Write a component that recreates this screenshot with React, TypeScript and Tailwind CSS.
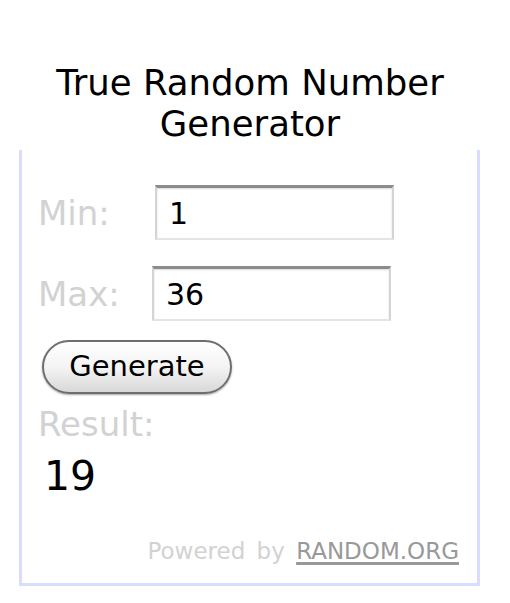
import React from 'react'

const font = { fontFamily: '"DejaVu Sans", Verdana, sans-serif' }

function Field({ label, value, labelWidth }: { label: string; value: string; labelWidth: string }) {
  return (
    <div className="flex items-center">
      <span className={`${labelWidth} text-[34px] leading-none text-[#d2d2d2]`}>{label}</span>
      <div className="flex h-[55px] w-[239px] items-center border-t-[3px] border-r-2 border-b-2 border-l-2 border-t-[#8c8c8c] border-r-[#d4d4d4] border-b-[#e4e4e4] border-l-[#d4d4d4] bg-white pl-[12px] text-[30px] text-black shadow-[inset_0_1px_2px_rgba(0,0,0,0.15)]">
        {value}
      </div>
    </div>
  )
}

export default function App() {
  return (
    <div className="h-[603px] w-[510px] bg-white" style={font}>
      <h1 className="w-[500px] pt-[62px] text-center text-[35.5px] leading-[41px] text-black">
        True Random Number
        <br />
        Generator
      </h1>

      <div className="ml-[19px] mt-[6px] flex h-[436px] w-[461px] flex-col border-x-[3px] border-b-[3px] border-[#dadcff] pl-[16px]">
        <div className="mt-[35px]">
          <Field label="Min:" value="1" labelWidth="w-[117px]" />
        </div>
        <div className="mt-[26px]">
          <Field label="Max:" value="36" labelWidth="w-[114px]" />
        </div>

        <button className="ml-[4px] mt-[19px] flex h-[54px] w-[190px] items-center justify-center rounded-full border-2 border-[#6e6e6e] bg-gradient-to-b from-white via-[#f4f4f4] to-[#d8d8d8] text-[29px] text-black shadow-[0_1px_2px_rgba(0,0,0,0.35)]">
          Generate
        </button>

        <div className="mt-[10px] text-[34px] leading-[40px] text-[#d2d2d2]">Result:</div>
        <div className="mt-[8px] pl-[6px] text-[41px] leading-[48px] text-black">19</div>

        <div className="mt-auto mb-[20px] mr-[18px] self-end text-[23px] leading-none text-[#d2d2d2] [word-spacing:4px]">
          Powered by{' '}
          <a href="#" className="text-[#999] underline decoration-[3px] decoration-[#999] underline-offset-[3px]">
            RANDOM.ORG
          </a>
        </div>
      </div>
    </div>
  )
}
